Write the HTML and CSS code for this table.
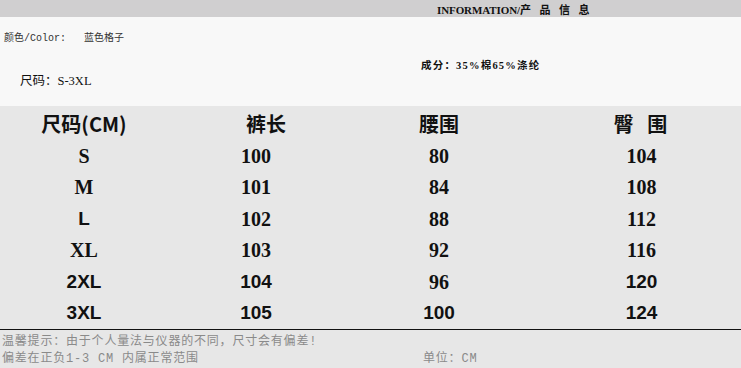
FILE: index.html
```html
<!DOCTYPE html>
<html lang="zh">
<head>
<meta charset="utf-8">
<link rel="stylesheet" href="styles.css">
</head>
<body>
<div class="page">
  <div class="topbar"><span class="info">INFORMATION/<span class="cn">产 品 信 息</span></span></div>
  <div class="intro">
    <div class="color">颜色/Color:&nbsp;&nbsp;&nbsp;蓝色格子</div>
    <div class="comp">成分：35%棉65%涤纶</div>
    <div class="size">尺码：S-3XL</div>
  </div>
  <div class="table">
    <div class="row head">
      <div class="c1">尺码(CM)</div>
      <div class="c2 shift">裤长</div>
      <div class="c3">腰围</div>
      <div class="c4">臀&nbsp;&nbsp;&nbsp;围</div>
    </div>
    <div class="row">
      <div class="c1 serif">S</div><div class="c2 serif">100</div><div class="c3 serif">80</div><div class="c4 serif">104</div>
    </div>
    <div class="row">
      <div class="c1 serif">M</div><div class="c2 serif">101</div><div class="c3 serif">84</div><div class="c4 serif">108</div>
    </div>
    <div class="row">
      <div class="c1 sans">L</div><div class="c2 serif">102</div><div class="c3 serif">88</div><div class="c4 serif">112</div>
    </div>
    <div class="row">
      <div class="c1 serif">XL</div><div class="c2 serif">103</div><div class="c3 serif">92</div><div class="c4 serif">116</div>
    </div>
    <div class="row">
      <div class="c1 sans">2XL</div><div class="c2 sans">104</div><div class="c3 serif">96</div><div class="c4 sans">120</div>
    </div>
    <div class="row">
      <div class="c1 sans">3XL</div><div class="c2 sans">105</div><div class="c3 sans">100</div><div class="c4 sans">124</div>
    </div>
  </div>
  <div class="footer">
    <div class="tip">温馨提示：由于个人量法与仪器的不同，尺寸会有偏差!</div>
    <div class="tip2"><span class="dev">偏差在正负1-3 CM 内属正常范围</span><span class="unit">单位：CM</span></div>
  </div>
</div>
</body>
</html>
```

FILE: styles.css
```css
html, body {
  margin: 0;
  padding: 0;
  background: #e7e7e7;
}
.page {
  width: 741px;
  height: 368px;
  overflow: hidden;
  display: flex;
  flex-direction: column;
}
.topbar {
  height: 17px;
  background: #d0cfd0;
  display: flex;
  align-items: center;
  padding-left: 437px;
}
.info {
  font-family: "Liberation Serif", serif;
  font-weight: bold;
  font-size: 11px;
  color: #111;
  letter-spacing: -0.1px;
}
.info .cn {
  font-family: "Noto Sans CJK SC", sans-serif;
  font-size: 11px;
  letter-spacing: 3px;
}
.intro {
  height: 89px;
  background: #f8f8f8;
  display: grid;
  grid-template-columns: 421px 1fr;
  grid-template-rows: 29px 27px 16px;
}
.color {
  grid-column: 1;
  grid-row: 1;
  align-self: end;
  padding-left: 4px;
  font-family: "Liberation Mono", "Noto Sans CJK SC", monospace;
  font-size: 10px;
  color: #333;
  line-height: 14px;
}
.comp {
  grid-column: 2;
  grid-row: 2;
  align-self: end;
  font-family: "Liberation Serif", "Noto Sans CJK SC", serif;
  font-weight: bold;
  font-size: 10.5px;
  letter-spacing: 1.2px;
  color: #111;
  line-height: 14px;
}
.size {
  grid-column: 1;
  grid-row: 3;
  align-self: end;
  padding-left: 20px;
  font-family: "Liberation Serif", "Noto Sans CJK SC", serif;
  font-size: 12.5px;
  color: #111;
  line-height: 16px;
}
.table {
  padding-top: 1px;
  border-bottom: 1px solid #111;
  display: flex;
  flex-direction: column;
}
.row {
  display: grid;
  grid-template-columns: 168px 176px 190px 207px;
  height: 31.5px;
  align-items: center;
  text-align: center;
  color: #111;
  font-size: 20px;
  line-height: 24px;
}
.row.head {
  height: 33px;
  font-family: "Noto Sans CJK SC", sans-serif;
  font-weight: 700;
  font-size: 20px;
}
.shift {
  padding-left: 20px;
}
.serif {
  font-family: "Liberation Serif", serif;
  font-weight: bold;
}
.sans {
  font-family: "Liberation Sans", sans-serif;
  font-weight: bold;
  font-size: 19px;
}
.c4 {
  padding-left: 8px;
}
.row.head .c4 {
  padding-left: 6px;
}
.footer {
  flex: 1;
  padding-top: 4px;
  font-family: "Liberation Mono", "Noto Sans CJK SC", monospace;
  font-size: 12px;
  letter-spacing: 0.8px;
  color: #8a8a8a;
  line-height: 17px;
}
.tip, .tip2 {
  padding-left: 2px;
}
.tip2 {
  display: flex;
}
.dev {
  width: 421px;
}
```
